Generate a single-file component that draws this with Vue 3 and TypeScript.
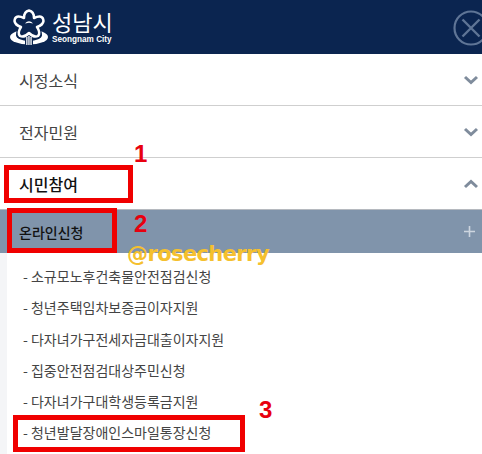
<template>
  <div class="page">
    <header class="top">
      <div class="logo">
        <svg class="mark" viewBox="0 0 38 38" width="38" height="38">
          <ellipse cx="19" cy="28" rx="19" ry="7.500" fill="#fff" />
          <ellipse cx="19" cy="26" rx="13" ry="6" fill="#0b2550" />
          <path d="M15 30h8v8h-8z" fill="#0b2550" />
          <path :d="petals" fill="#0b2550" stroke="#0b2550" stroke-width="5" />
          <path :d="petals" fill="#0b2550" stroke="#fff" stroke-width="2.500" stroke-linejoin="round" />
          <path d="M15 14.500c1.300-1.600 2.800-2.300 4-2.300s2.700.7 4 2.300l-4-.8z" fill="#fff" />
          <path d="M16.200 28h1.300v8h-1.300zM18.300 27h1.300v9h-1.300zM20.400 28h1.300v8h-1.300z" fill="#fff" />
        </svg>
        <div class="logo-text">
          <span class="city-ko">성남시</span>
          <span class="city-en">Seongnam City</span>
        </div>
      </div>
      <svg class="close" viewBox="0 0 34 38" width="34" height="38">
        <circle cx="19" cy="19" r="16.500" fill="none" stroke="#5f7596" stroke-width="2.200" />
        <path d="M10.500 10.500l17 17M27.500 10.500l-17 17" fill="none" stroke="#5f7596" stroke-width="2.400" />
      </svg>
    </header>

    <nav class="menu">
      <div v-for="item in menus" :key="item.label" class="menu-row" :class="{ active: item.open }">
        <span>{{ item.label }}</span>
        <svg class="chev" viewBox="0 0 16 10" width="16" height="10">
          <path :d="item.open ? 'M2 8l6-5.500L14 8' : 'M2 2l6 5.500L14 2'" fill="none" stroke="#7f8c9c" stroke-width="3" />
        </svg>
      </div>
      <div class="sub-head">
        <span>온라인신청</span>
        <svg class="plus" viewBox="0 0 11 11" width="11" height="11">
          <path d="M5.500 0v11M0 5.500h11" stroke="#cdd5df" stroke-width="1.600" />
        </svg>
      </div>
      <ul class="sub-list">
        <li v-for="link in links" :key="link">- {{ link }}</li>
      </ul>
    </nav>

    <div class="mark-box box-1"></div>
    <div class="mark-box box-2"></div>
    <div class="mark-box box-3"></div>
    <span class="num num-1">1</span>
    <span class="num num-2">2</span>
    <span class="num num-3">3</span>
    <span class="watermark">@rosecherry</span>
  </div>
</template>

<script setup lang="ts">
const petals =
  'M19 1.500Q24 2.500 24 9Q33 5 33.500 12Q33 16 27 18Q31 24 28 27Q24 29 19 24Q14 29 10 27Q7 24 11 18Q5 16 4.500 12Q5 5 14 9Q14 2.500 19 1.500z'

const menus = [
  { label: '시정소식', open: false },
  { label: '전자민원', open: false },
  { label: '시민참여', open: true }
]

const links = [
  '소규모노후건축물안전점검신청',
  '청년주택임차보증금이자지원',
  '다자녀가구전세자금대출이자지원',
  '집중안전점검대상주민신청',
  '다자녀가구대학생등록금지원',
  '청년발달장애인스마일통장신청'
]
</script>

<style>
html,
body {
  margin: 0;
  background: #fff;
}
</style>

<style scoped>
.page {
  position: relative;
  width: 482px;
  height: 454px;
  overflow: hidden;
  font-family: "Noto Sans CJK KR", "Noto Sans", sans-serif;
  color: #3c3c3c;
  background: #fff;
}

.top {
  height: 54px;
  background: #0b2550;
  display: flex;
  justify-content: space-between;
  align-items: flex-start;
  box-sizing: border-box;
  padding: 9px 0 0 10px;
  overflow: hidden;
}

.logo {
  display: flex;
  gap: 4px;
}

.logo-text {
  display: flex;
  flex-direction: column;
  color: #fff;
}

.city-ko {
  font-size: 22px;
  line-height: 25px;
  height: 25px;
}

.city-en {
  font-family: "Liberation Sans", sans-serif;
  font-size: 8.200px;
  font-weight: bold;
  line-height: 10px;
  margin-top: 1px;
}

.close {
  margin-right: -4px;
  flex-shrink: 0;
}

.menu-row {
  height: 52px;
  box-sizing: border-box;
  border-bottom: 1px solid #cfcfcf;
  padding: 0 3px 0 19px;
  display: flex;
  justify-content: space-between;
  align-items: center;
  font-size: 16px;
  color: #444;
}

.menu-row.active {
  height: 51px;
  color: #111;
  font-weight: 500;
  border-bottom: 0;
}

.sub-head {
  height: 44px;
  box-sizing: border-box;
  border-top: 1px solid #b5b9bf;
  background: #8094ab;
  color: #111;
  font-size: 14px;
  font-weight: 500;
  padding: 0 7px 0 19px;
  display: flex;
  justify-content: space-between;
  align-items: center;
}

.sub-list {
  list-style: none;
  margin: 0;
  padding: 8px 0 0 16px;
  margin-left: 7px;
  background: #fff;
  box-shadow: -7px 0 0 #f4f5f7;
  height: 201px;
  box-sizing: border-box;
}

.sub-list li {
  height: 31.300px;
  line-height: 31.300px;
  font-size: 14px;
  color: #444;
}

.mark-box {
  position: absolute;
  box-sizing: border-box;
  border: 5px solid #f00000;
}

.box-1 {
  left: 4px;
  top: 165px;
  width: 129px;
  height: 38px;
}

.box-2 {
  left: 7px;
  top: 208px;
  width: 110px;
  height: 45px;
}

.box-3 {
  left: 13px;
  top: 415px;
  width: 232px;
  height: 37px;
}

.num {
  position: absolute;
  font-family: "Liberation Sans", sans-serif;
  font-weight: bold;
  font-size: 24px;
  line-height: 26px;
  color: #e8000f;
}

.num-1 {
  left: 134px;
  top: 141px;
}

.num-2 {
  left: 134px;
  top: 211px;
}

.num-3 {
  left: 259px;
  top: 397px;
}

.watermark {
  position: absolute;
  left: 127px;
  top: 239px;
  font-family: "DejaVu Sans", sans-serif;
  font-weight: bold;
  font-size: 21px;
  line-height: 30px;
  letter-spacing: -0.6px;
  color: #f5c02e;
}
</style>
